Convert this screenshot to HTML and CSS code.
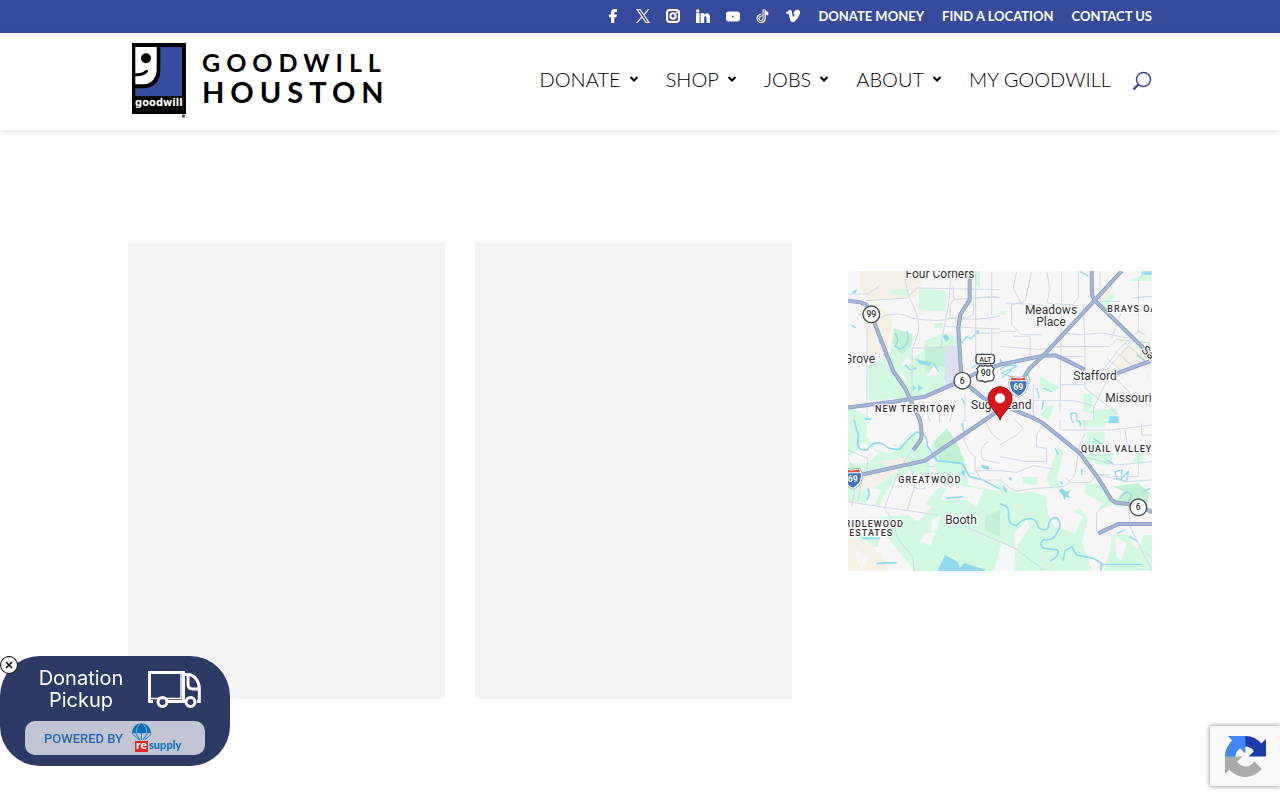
FILE: index.html
```html
<!DOCTYPE html>
<html lang="en">
<head>
<meta charset="utf-8">
<meta name="viewport" content="width=device-width, initial-scale=1">
<title>Goodwill Houston</title>
<link rel="stylesheet" href="styles.css">
</head>
<body>
<div class="topbar">
  <ul class="social">
    <li><a href="#" aria-label="Facebook"><svg viewBox="0 0 14 14"><path d="M5 14V8.300H3V5.400h2V4c0-2.600 1.300-4 3.600-4H11v3H9.500C8.600 3 8.300 3.300 8.300 4v1.400h2.500l-.4 2.900H8.300V14z"/></svg></a></li>
    <li><a href="#" aria-label="X"><svg viewBox="0 0 14 14"><path fill-rule="evenodd" d="M0 0h4.300l3.500 4.900L12 0h1.500L8.500 5.900 14 14H9.700L6 8.800 1.500 14H0l5.300-6.200zM2.200 1.100l8.100 11.800h1.600L3.800 1.100z"/></svg></a></li>
    <li><a href="#" aria-label="Instagram"><svg viewBox="0 0 14 14"><rect class="line" x="1" y="1" width="12" height="12" rx="3"/><circle class="line" cx="7" cy="7" r="2.700"/><circle cx="10.700" cy="3.400" r="1"/></svg></a></li>
    <li><a href="#" aria-label="LinkedIn"><svg viewBox="0 0 14 14"><circle cx="1.700" cy="2" r="1.700"/><path d="M0 4.300h3.600V14H0zM4.600 4.300h3.500V6c.6-1 1.600-1.700 2.800-1.700C13.200 4.300 14 6 14 8.500V14h-3.500V9c0-1.300-.4-1.800-1.100-1.800-.8 0-1.200.6-1.200 1.800v5H4.600z"/></svg></a></li>
    <li><a href="#" aria-label="YouTube"><svg viewBox="0 0 14 14"><path fill-rule="evenodd" d="M3 2.500h8q3 0 3 3v4q0 3-3 3H3q-3 0-3-3v-4q0-3 3-3zM6 6.200v2.600L8.200 7.500z"/></svg></a></li>
    <li><a href="#" aria-label="TikTok"><svg viewBox="0 0 14 14"><path class="note-red" d="M8.500 1v8.700a3.100 3.100 0 1 1-3-3.100M8.500 2q.8 2.700 4 3"/><path class="note" d="M8 .5v9a3 3 0 1 1-3-3M8 1.500q.8 2.800 4 3"/><path class="note-core" d="M8 1v8.500a3 3 0 1 1-3-3"/></svg></a></li>
    <li><a href="#" aria-label="Vimeo"><svg viewBox="0 0 14 14"><path d="M0 3.800 3 1.200C4.500 0 5.400.8 5.800 2.700l.9 4.200c.3 1.200.6 1.200 1.200.2.900-1.400 1.200-2.600-.7-2C8 2.200 9.600.7 11.700.8c1.800.1 2.600 1.400 2.200 3.500-.5 2.800-2.500 5.500-4.800 7.700-2.400 2.200-4 1.500-4.900-1.200L2.600 5.300C2.200 4 1.600 4.300.7 4.900z"/></svg></a></li>
  </ul>
  <nav class="topbar-links" aria-label="Secondary">
    <a href="#">DONATE MONEY</a>
    <a href="#">FIND A LOCATION</a>
    <a href="#">CONTACT US</a>
  </nav>
</div>

<header class="header">
  <a class="logo" href="#" aria-label="Goodwill Houston home">
    <svg viewBox="132 43 250 76">
      <path d="M132 43h54v71h-54z"/>
      <path fill="#364b9e" d="M160.300 47H182v49h-46.700v-7.700h7.700c11 0 17.300-7 17.300-18z"/>
      <path fill="#fff" d="M135.300 47h21.400v22c0 9-5.200 15.300-13.500 15.300h-7.900z"/>
      <circle cx="146" cy="58.300" r="5"/>
      <path d="M135 74.800q8 .5 11.500-3.500" fill="none" stroke="#000" stroke-width="3" stroke-linecap="round"/>
      <text class="logo-small" x="135" y="106">goodwill</text>
      <circle cx="183.500" cy="116" r="1.800" fill="#555"/>
      <text class="logo-top" x="202" y="72">GOODWILL</text>
      <text class="logo-bottom" x="202" y="103">HOUSTON</text>
    </svg>
  </a>
  <nav class="menu" aria-label="Primary">
    <a href="#">DONATE <svg class="caret" viewBox="0 0 10 8"><path d="m1.500 2 3.500 3.500L8.500 2"/></svg></a>
    <a href="#">SHOP <svg class="caret" viewBox="0 0 10 8"><path d="m1.500 2 3.500 3.500L8.500 2"/></svg></a>
    <a href="#">JOBS <svg class="caret" viewBox="0 0 10 8"><path d="m1.500 2 3.500 3.500L8.500 2"/></svg></a>
    <a href="#">ABOUT <svg class="caret" viewBox="0 0 10 8"><path d="m1.500 2 3.500 3.500L8.500 2"/></svg></a>
    <a href="#">MY GOODWILL</a>
    <button class="search" type="button" aria-label="Search"><svg viewBox="0 0 20 20"><circle cx="11.500" cy="8.500" r="7"/><path d="M6.300 13.500 1.500 18.300" stroke-width="2.400"/></svg></button>
  </nav>
</header>

<main class="content">
  <div class="panel"></div>
  <div class="panel"></div>
  <div class="map-column">
    <svg class="map" viewBox="0 0 912 900" role="img" aria-label="Map of Sugar Land">
      <rect width="912" height="900" fill="#f6f6f7"/>

      <g transform="translate(-9 -9)">
        <path class="sand" d="M45 0h145l50 20-30 70-60 5-85 0-20-45zM65 100l80 40-20 110-58 20z"/>
        <path class="park" d="M140 65l50-2v20l-50-5zM222 60l80 8v62l-80-5zM70 290l80-30 60 40 90-15 40 55-100 45-168 14zM268 165h25v15h-25zM9 415l70 35 5 20H9zM145 180l55 15 20 30 80-30 38 12v25l-88 0v60l-90 20-25-40zM385 10h20v50l-15-15z"/>
        <path class="park-dark" d="M150 182l50 18v30l-30 30-25-30zM240 236l60-4v60l-60 20z"/>
        <path fill="#dbe0f2" d="M300 232h44l8 110-52 18z"/>
        <path fill="#f6f6f7" d="M200 220l38-30v55l-38 30zM160 300l30 45-25-20zM245 325l25-35 15 30zM185 265l20 20-35 10z"/>
        <path class="water" d="M212 272l18 6 30 4-5 12-30-6zM20 72l18-10-8 16zM292 205l10-6 12 12-10 10zM390 190l12-4v14zM203 352l12 8-12 8zM220 352l16 8-16 8zM113 258l8-2 8 22zM60 450l15 0 8 16H60zM100 215l10 4-8 8z"/>
        <path class="stream" d="M150 195q15 20 0 40l15 8q35-15 20-55M350 225l15-20 12 8 20-20M180 290l15 15 20-5M20 170l12 10M410 255l40 30M380 300l40-25M365 345l20 30M350 390l10 20M265 285l15 25"/>
        <path class="local" d="M9 78h60l35-25M66 170v280M180 9q0 60 25 105 20 40 15 80l-18 50-2 150M100 150q60-25 100 0 80 15 120 0 70 10 145-5M318 10l-6 90-15 80-10 60h-85M392 10v270M392 88h73M330 90l-15 20 0 40 50 0 20-10 0-40M300 175l165 8M440 10v130M440 180v100M392 195h73M325 55v40l130-10M65 98l120-8 30-30 250 5M235 400l20 60M280 400l5 65M330 400l-15 60M360 380v80M240 430l90-8"/>
      </g>
      <g transform="translate(456 -9)">
        <path class="sand" d="M325 45l20 30-50 25-8-8zM370 240l30-5 55 15v40l-90 25-15-20zM450 300v40l-15-20z"/>
        <path class="park" d="M333 78l12 2-30 50-18-25zM385 40l70-32v30zM120 325l60 32-20 15-40-8zM140 415l25-8-20 50-25-15zM250 378l30 0-10 50 80-8v45h-65l-5-25-30-10zM410 210l25 10-10 30-15-10zM0 130h18v10H0z"/>
        <path class="water" d="M330 445h26v20h-30zM425 10h30v10h-30zM0 270l10 15H0z"/>
        <path class="stream" d="M0 305q20-20 50-10l-45 20 30 12M5 330l30-25M75 310q20 20 10 40M130 360l25 12M240 10l25 15M220 465q-15-30 0-30 15 0 10 20M110 360l8 30M130 400l-5 25M410 260l40 30"/>
        <path class="local" d="M50 10l-10 50 20 40M95 10l-20 90-40 10v60l30 30 60 0M140 10q15 60 0 95l95 8M235 9v80l-20 25M185 10v90l-5 330M15 105l100 5 50 10M250 110l5 140 0 110 100 80M0 235l120 10 60-10 150 0 20-20 100 10M180 195l65 5 60-5 80 15M0 405h95l10 55M100 350v115M100 398l120 0 60 15M345 330l60 60 50 25M435 10l-20 30v150l20 10M415 190l-60 55-60 80M395 225l-80 85M375 225l70 60M345 250l60 50M320 270l60 50M330 320l-50 100v50M365 130l-30 80M395 90l60-5M300 10l0 90 60 0M40 205h50v60M0 190h50M180 265h70M185 350h70"/>
      </g>
      <g transform="translate(-9 447)">
        <path class="park" d="M9 0l60 0-5 50 30 40 40 10 80-65 40 60 0 80-60-15-40 10-40 60-8 25-97-12V130l60 0 30-30-40-35-50 50zM260 75l55-30 50 90 5 60 96 20 10 240H210l-95-120-10-45 85-5 30 20 40-45-45-20 30-35 60 0-35-60zM35 345h65v35H50z"/>
        <path class="park-dark" d="M265 65l40-40 30 40 25 60-75 0zM420 290l45-20v80l-45-20zM145 65l10-5v20l-15-4z"/>
        <path class="sand" d="M9 355l55 5 60 65 0 30H9zM50 170l105-40 40-25-20 40-100 65-35 5zM100 125l70-10 20 15-60 10z"/>
        <path fill="#f6f6f7" d="M65 0h140l-20 60-50 20-70-30zM190 150l90 50-50 70-100-10zM315 190l100 20-20 50-30-20-80 0zM260 298l25-8-8 38-20 10zM240 340l32-4-15 40-30-10zM70 200l40 10-25 50-20-5zM35 390l40 25-25 35-20-40z"/>
        <path class="water" d="M300 405l37 20 8 18 12-14 65 20-10 10H275zM350 150l12 4-4 14-10-8zM410 135l22 4v10l-22-5z"/>
        <path class="stream thick" d="M28 0q5 30 12 42l-2 30q0 20 28 18 18-30 48-18 20 20 50 15 25-30 48-50 35-3 35 40l30 45 75 8 22 40 40 10 51 28M68 205q10 20-3 35M305 235l50-5M95 430l60-2M50 355h55M350 10l10 35"/>
        <path class="local" d="M9 245l50 8 220 32M210 195l-23 75M200 90l-40 65-42 110 20 30 20 60 45 55 5 50M195 145q15 15 0 35 10 35 45 25M240 135q25 10 30 0M280 170q20-25 40 0 5 20-20 22M355 0v50q15 50 35 60v42h75M360 320l105 45M9 90l60 25-5 50M9 115l40 70-10 60M420 0q20 50 45 60M430 65q-35 20-15 55l50 10M390 150l20 30h55M240 160l40 0M30 200l-10 60"/>
      </g>
      <g transform="translate(456 447)">
        <path class="park" d="M225 0l90 0 0 20-75 0zM260 35l55 0-5 60-50-10zM280 80l60 20-10 40-80-20zM415 100l15-5v40l-35-10zM65 170l50 0-5 25-40-5zM175 80l15 20-20 80 15 25-35 0-10-30zM0 180l20 30 35 10 45-5 55 20 25 60 60-30 25 30-20 70 30 80 0 113h-85L60 380 0 365zM255 190l60 5 40 65-50-10-50-30zM335 345h121v108H310l20-60zM315 250l60-10 0 30-70 50-10-60z"/>
        <path class="park-dark" d="M335 200l80-10 35 30-15 50-100-25z"/>
        <path class="park" d="M0 365l100 0 100 90H0z"/>
        <path fill="#f6f6f7" d="M135 215l60 15-20 25 75 35-25 50-60-20-20-35zM330 195l40 20-20 25-15-5zM290 275l45-20 40 10-5 60-70 20-10-30zM385 315l60 8-35 65-15-15zM345 350l35 20-15 50-15-10zM5 370l40 12-2 72H-20zM80 300l10 20-35 50v14h-12v-44z"/>
        <path class="water" d="M326 0h25v10l-25-3zM185 205l15 10 10-5-5 15 8 10-15-5-5 10-5-15-12-12zM10 195l10 12v12l-10-10zM25 175l10-5 0 14zM178 182l10 4v10z"/>
        <path class="stream thick" d="M0 252q30 5 25 30 0 35 25 35 20-25 45-20 15 0 20 25 20 15 30 0 0-30 25-28 20 20 0 45-10 25-40 20-15 15 0 25l40 5q15 15-20 35M190 422l5-30 20-12 15 25 50 10 25 15-3 23"/>
        <path class="stream" d="M300 433h125M345 155l20-5 0 25 20-20-5 30-30-10zM360 235q20-30 35-10l-15 30M230 0q15 5 10 20M280 55l30 20M245 145v20M165 85l10 20M320 120l20 10M430 215l20-10M350 340l25-10M390 350l25 15"/>
        <path class="local" d="M0 75l50-30 20-20-25-25M130 10l-20 35 0 35 30 5v40h-60L0 110M0 152l50 5 50-20 60 10M0 178q30 30 50 35l60-8 80-5q30-20 35-40l15-90 15-30M185 30l150 0 121-15M255 0v30M330 165l-40-2-20 25H215l-20-15M250 110l100 25 106-10M375 30l10 60 30 10v70M415 170h-80M330 238l-40 40v60M385 250l5 70 65 130M0 365l45 20 90 68M300 165l75 20 80-5M180 0v30M425 395h10l20 20M425 10v35h30"/>
      </g>

      <g class="road-edge"><use href="#roads"/></g>
      <g class="road-fill">
        <g id="roads">
          <path d="M-5 89l43 5 18 8 14 28 19 51 47 120 35 50 25 55 20 41q8 50 2 60l-22 30"/>
          <path d="M-5 410l136-17 100-16 110-48 45-23 70-25 130-27 35-1 30 13 60 30M806 307l90-33 20-8"/>
          <path d="M821 0l-81 88-154 166-40 37-30 45-60 79-45 32-180 122-236 52"/>
          <path d="M365-5v91l-28 45-6 40 8 130 4 28 63 52 50 19 100 41 30 16 110 90 55 75 40 65 13 8 37 4 75 24"/>
          <path d="M731-5l1 76 8 17 146 143 30 25M751 787l60-28h105"/>
        </g>
      </g>

      <g class="place">
        <text x="276" y="21" text-anchor="middle">Four Corners</text>
        <text x="609" y="129" text-anchor="middle">Meadows</text>
        <text x="609" y="165" text-anchor="middle">Place</text>
        <text x="81" y="275" text-anchor="end">Grove</text>
        <text x="369" y="415">Sugar Land</text>
        <text x="741" y="327" text-anchor="middle">Stafford</text>
        <text x="772" y="393">Missouri</text>
        <text x="339" y="759" text-anchor="middle">Booth</text>
        <text transform="translate(878 240) rotate(42)">Sam</text>
      </g>
      <g class="district">
        <text x="778" y="122">BRAYS OAKS</text>
        <text x="81" y="423">NEW TERRITORY</text>
        <text x="151" y="636">GREATWOOD</text>
        <text x="168" y="767" text-anchor="end">RIDLEWOOD</text>
        <text x="136" y="795" text-anchor="end">ESTATES</text>
        <text x="699" y="544">QUAIL VALLEY</text>
      </g>
      <g class="shield">
        <circle cx="70" cy="130" r="25"/><text x="70" y="139">99</text>
        <circle cx="343" cy="329" r="25"/><text x="343" y="338">6</text>
        <circle cx="871" cy="709" r="25"/><text x="871" y="718">6</text>
        <rect x="384" y="250" width="55" height="28" rx="8"/><text class="alt" x="412" y="272">ALT</text>
        <path d="M396 283q8 5 16 0 8 5 17 0l9 10q-7 8 0 20 3 17-14 17-7 0-12 4-5-4-12-4-17 0-14-17 7-12 0-20z"/><text x="413" y="316">90</text>
      </g>
      <g id="interstate">
        <path d="M489 315q22 8 43 0l7 14q6 38-28 50-34-12-28-50z" fill="#fff" stroke="#99a" stroke-width="2"/>
        <path d="M487 331h48q4 30-24 43-28-13-24-43z" fill="#3c73c9"/>
        <path d="M491 319q20 7 39 0l4 9h-47z" fill="#dd5148"/>
        <text class="interstate-number" x="511" y="357">69</text>
      </g>
      <use href="#interstate" x="-497" y="276"/>
      <path d="M456 447c-6-20-36-38-36-64a36 36 0 0 1 72 0c0 26-30 44-36 64z" fill="#d5161c" stroke="#a00f12" stroke-width="3"/>
      <circle cx="456" cy="382" r="15" fill="#fff"/>
    </svg>
  </div>
</main>

<aside class="pickup">
  <button class="close" type="button" aria-label="Close"><svg viewBox="0 0 8 8"><path d="m1 1 6 6M7 1 1 7"/></svg></button>
  <a class="pickup-link" href="#">
    <span class="pickup-title">Donation Pickup</span>
    <svg class="truck" viewBox="0 0 53 37"><path d="M5 30.500H1.500v-29h34v29H20M35.500 3.500h4.800c6 0 11 7 11 14v13H49M35.500 30.500h2.500M40 4v9q0 5 5 5h6"/><path d="M33 3v24.500H2M38 27.500h4" stroke-width="1.500"/><circle cx="14.500" cy="31" r="4.500"/><circle cx="42.500" cy="31" r="4.500"/></svg>
  </a>
  <a class="powered" href="#">
    <span>POWERED BY</span>
    <svg class="resupply" viewBox="0 0 54 30" role="img" aria-label="resupply">
      <path fill="#0d70b8" d="M0 11C0-3.500 19-3.500 19 11q-2-2-4 0-2.500-2-5.500 0-3-2-5.500 0-2-2-4 0z"/>
      <path fill="none" stroke="#0d70b8" stroke-width=".9" d="m.5 11 7 6m-3.500-6 4 6m1.500-6v6m5.500-6-4 6m8.500-6-7 6"/>
      <path fill="none" stroke="#c2c5d3" stroke-width=".7" d="M4 11q0-7 4-10.500M15 11q0-7-4-10.500"/>
      <path fill="#e4252a" d="M3 18h13v11H3z"/>
      <text class="resupply-re" x="4" y="26">re</text>
      <text class="resupply-name" x="17" y="26">supply</text>
    </svg>
  </a>
</aside>

<div class="captcha">
  <svg viewBox="0 0 64 64" role="img" aria-label="reCAPTCHA">
    <path fill="#1c3aa9" d="M64 31.955l-.033-1.370V4.687l-7.160 7.160C50.948 4.674 42.033.093 32.050.093c-10.400 0-19.622 4.960-25.458 12.640l11.736 11.860a15.550 15.550 0 0 1 4.754-5.334c2.050-1.600 4.952-2.906 8.968-2.906.485 0 .860.057 1.135.163 4.976.393 9.288 3.140 11.828 7.124l-8.307 8.307L64 31.953"/>
    <path fill="#4285f4" d="M31.862.094l-1.370.033H4.594l7.160 7.160C4.580 13.147 0 22.060 0 32.046c0 10.400 4.960 19.622 12.640 25.458L24.500 45.768a15.550 15.550 0 0 1-5.334-4.754c-1.600-2.050-2.906-4.952-2.906-8.968 0-.485.057-.860.163-1.135.393-4.976 3.140-9.288 7.124-11.828l8.307 8.307L31.860.095"/>
    <path fill="#ababab" d="M.001 32.045l.033 1.370v25.898l7.160-7.160c5.860 7.173 14.774 11.754 24.760 11.754 10.400 0 19.622-4.960 25.458-12.640l-11.736-11.860a15.550 15.550 0 0 1-4.754 5.334c-2.050 1.600-4.952 2.906-8.968 2.906-.485 0-.860-.057-1.135-.163-4.976-.393-9.288-3.140-11.828-7.124l8.307-8.307c-10.522.040-22.400.066-27.295-.005"/>
  </svg>
</div>
</body>
</html>
```
FILE: styles.css
```css
* { box-sizing: border-box; }

body {
  margin: 0;
  background: #fff;
  color: #000;
  font-family: Lato, "Open Sans", sans-serif;
}

a { color: inherit; text-decoration: none; }
button { padding: 0; cursor: pointer; }
svg { display: block; }

/* Top bar */
.topbar {
  display: flex;
  justify-content: flex-end;
  align-items: center;
  gap: 18px;
  min-height: 33px;
  padding: 0 10% 2px;
  background: #384a9c;
  color: #fff;
}
.social {
  display: flex;
  gap: 16px;
  margin: 0;
  padding: 0;
  list-style: none;
}
.social svg { width: 14px; height: 14px; fill: #fff; }
.social .line { fill: none; stroke: #fff; stroke-width: 2; }
.social .note,
.social .note-core,
.social .note-red { fill: none; stroke-width: 3; stroke: #fff; }
.social .note-core { stroke: #285c91; stroke-width: 1; }
.social .note-red { stroke: #f3a6c0; }
.topbar-links {
  display: flex;
  gap: 18px;
  font-size: 13px;
  font-weight: 700;
  line-height: 16px;
}

/* Header */
.header {
  display: flex;
  justify-content: space-between;
  align-items: center;
  min-height: 97px;
  padding: 0 10% 2px;
  box-shadow: 0 1px 6px rgba(0, 0, 0, 0.12);
}
.logo { padding-left: 4px; }
.logo svg { width: 250px; height: 76px; }
.logo text { font-family: Lato, sans-serif; font-weight: 700; }
.logo .logo-small { font: 700 10px "DejaVu Sans", sans-serif; fill: #fff; }
.logo .logo-top { font-size: 25px; letter-spacing: 6px; }
.logo .logo-bottom { font-size: 29px; letter-spacing: 6px; }
.menu {
  display: flex;
  align-items: center;
  gap: 27px;
  font-size: 20px;
  font-weight: 300;
  line-height: 24px;
}
.menu a { display: flex; align-items: center; gap: 8px; padding-bottom: 3px; }
.caret { width: 10px; height: 8px; fill: none; stroke: #000; stroke-width: 2; }
.search { margin-left: -6px; border: 0; background: none; }
.search svg { width: 20px; height: 20px; fill: none; stroke: #384a9c; stroke-width: 1.5; }

/* Content */
.content {
  display: grid;
  grid-template-columns: 317fr 317fr 330fr;
  gap: 30px;
  padding: 113px 10% 96px;
}
.panel { min-height: 456px; background: #f4f4f4; }
.map-column { padding: 28px 0 0 26px; }
.map { width: 100%; overflow: hidden; }

.sand { fill: #f5f0e5; }
.park { fill: #d3f8e2; }
.park-dark { fill: #c1f0d4; }
.water { fill: #90daee; }
.stream { fill: none; stroke: #90daee; stroke-width: 4; }
.stream.thick { stroke-width: 5; }
.local { fill: none; stroke: #d0d8e3; stroke-width: 3; }
.road-edge { fill: none; stroke: #8799bf; stroke-width: 12; }
.road-fill { fill: none; stroke: #a4b5d5; stroke-width: 8; }
.place,
.district {
  font-family: Roboto, sans-serif;
  fill: #333;
  stroke: #fff;
  stroke-width: 6;
  stroke-linejoin: round;
  paint-order: stroke;
}
.place { font-size: 36px; }
.district { font-size: 27px; font-weight: 500; letter-spacing: 3px; }
.shield { fill: #fff; stroke: #4a4e52; stroke-width: 4; }
.shield text {
  fill: #333;
  stroke: none;
  font: 500 26px Roboto, sans-serif;
  text-anchor: middle;
}
.shield .alt { font-size: 22px; }
.interstate-number {
  fill: #fff;
  font: 700 26px Roboto, sans-serif;
  text-anchor: middle;
}

/* Donation pickup widget */
.pickup {
  position: fixed;
  bottom: 34px;
  left: 0;
  width: 230px;
  min-height: 110px;
  padding: 11px 25px;
  border-radius: 40px;
  background: #2d3a66;
  color: #fff;
  font-family: Inter, sans-serif;
}
.close {
  position: absolute;
  top: 0;
  left: 0;
  display: grid;
  place-items: center;
  width: 18px;
  height: 18px;
  border: 1px solid #000;
  border-radius: 50%;
  background: #fff;
}
.close svg { width: 8px; height: 8px; stroke: #000; stroke-width: 1.5; }
.pickup-link {
  display: flex;
  justify-content: space-between;
  align-items: center;
  padding: 0 4px 0 10px;
}
.pickup-title {
  width: 92px;
  font-size: 20px;
  line-height: 22px;
  text-align: center;
}
.truck { width: 53px; height: 37px; fill: none; stroke: #fff; stroke-width: 3; }
.powered {
  display: flex;
  justify-content: center;
  align-items: center;
  gap: 9px;
  height: 34px;
  margin-top: 10px;
  border-radius: 10px;
  background: #c2c5d3;
  color: #2368b8;
  font-family: Roboto, sans-serif;
  font-size: 13px;
  font-weight: 500;
}
.resupply { width: 54px; height: 30px; }
.resupply text { font-family: Lato, sans-serif; font-weight: 900; }
.resupply-re { font-size: 12px; fill: #fff; }
.resupply-name { font-size: 11px; fill: #0d70b8; }

/* reCAPTCHA badge */
.captcha {
  position: fixed;
  right: 0;
  bottom: 14px;
  width: 70px;
  height: 60px;
  padding: 10px 15px;
  border-radius: 2px 0 0 2px;
  background: #f9f9f9;
  box-shadow: 0 0 5px gray;
}
.captcha svg { width: 41px; height: 41px; }
```
